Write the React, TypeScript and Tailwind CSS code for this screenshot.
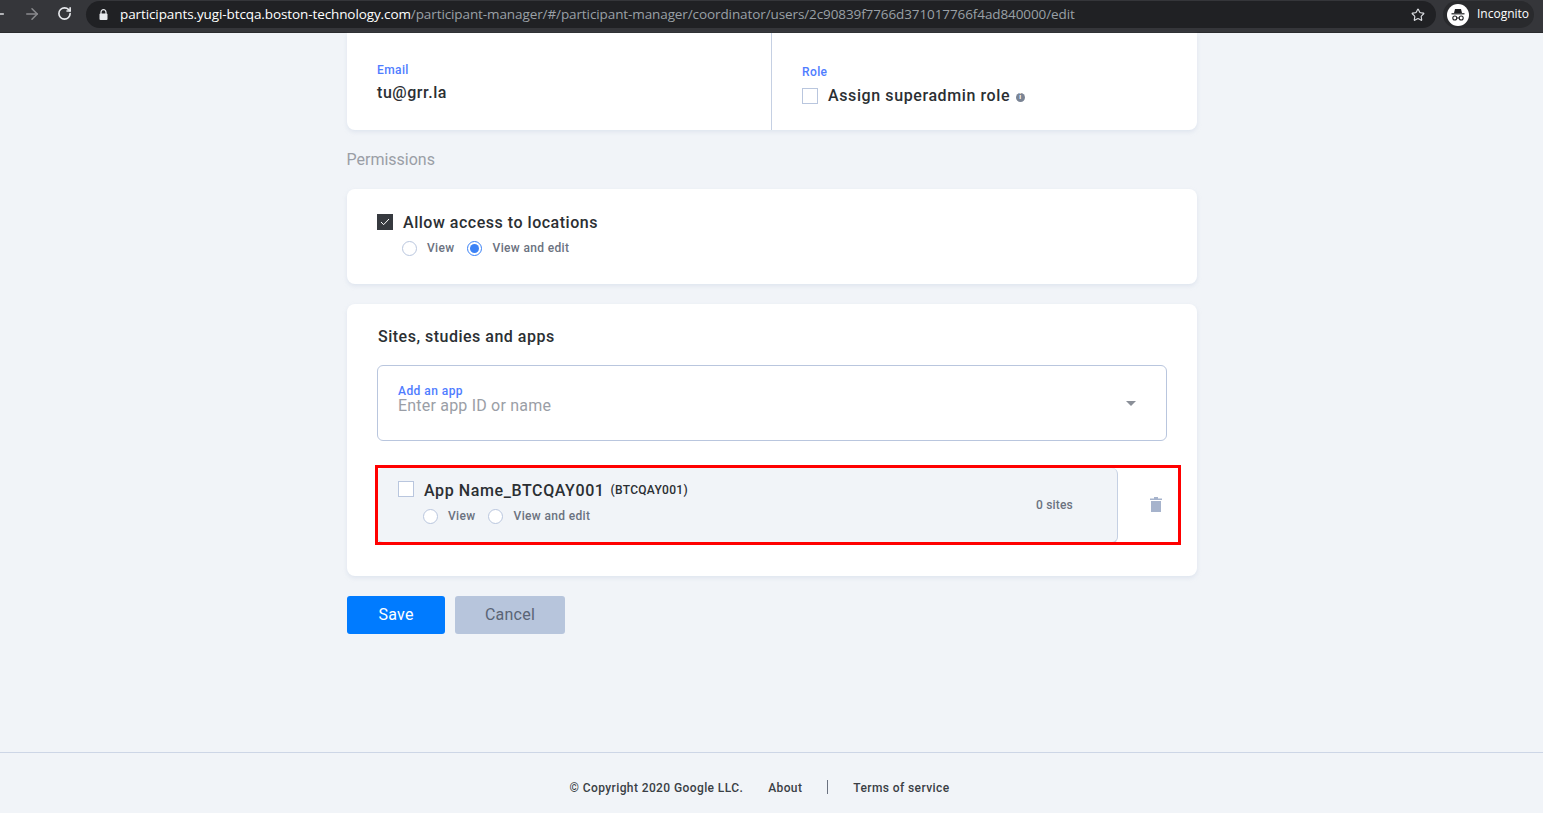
import React from 'react';
import { ArrowLeft, ArrowRight, RotateCw, Star } from 'lucide-react';

const Radio = ({ on }: { on?: boolean }) => (
  <span className={`flex h-[15px] w-[15px] shrink-0 items-center justify-center rounded-full border bg-white ${on ? 'border-[#3b82f6]' : 'border-[#b9c6de]'}`}>
    {on && <span className="h-[9px] w-[9px] rounded-full bg-[#3b82f6]" />}
  </span>
);

const Access = ({ edit }: { edit?: boolean }) => (
  <div className="flex items-center text-[12px] font-medium tracking-[0.35px] text-[#6b7280]">
    <Radio />
    <span className="ml-[10.5px]">View</span>
    <span className="ml-[12.5px]"><Radio on={edit} /></span>
    <span className="ml-[10.5px]">View and edit</span>
  </div>
);

const Box = () => <span className="h-4 w-4 shrink-0 border border-[#b9c6de] bg-white" />;

const Card = ({ className, children }: { className: string; children: React.ReactNode }) => (
  <section className={`w-[850px] bg-white shadow-[0_2px_4px_rgba(190,200,220,0.35)] ${className}`}>{children}</section>
);

const App: React.FC = () => {
  return (
    <div className="relative flex h-[813px] flex-col overflow-hidden bg-[#f1f4f8] font-['Roboto','Liberation_Sans',sans-serif] text-[#2b2f33]">
      {/* browser toolbar */}
      <header className="flex h-[33px] shrink-0 items-start border-b border-[#2a2b2e] bg-[#35363a] pt-px text-[#dadce0]">
        <ArrowLowerLeft />
        <ArrowRight size={18} className="ml-[16px] mt-[4px] text-[#8a8b8e]" />
        <RotateCw size={15} strokeWidth={2.6} className="ml-[16px] mt-[5px] text-[#e8eaed]" />
        <div className="ml-[14px] flex h-[27px] w-[1350px] items-center rounded-full bg-[#202124] pl-[13px] pr-[11px]">
          <svg width="9" height="12" viewBox="0 0 9 12" fill="#e8eaed">
            <rect x="0.5" y="4.5" width="8" height="6.5" rx="1" />
            <path d="M2 5V3.2a2.5 2.5 0 0 1 5 0V5" fill="none" stroke="#e8eaed" strokeWidth="1.2" />
          </svg>
          <div className="ml-[12px] flex-1 whitespace-nowrap font-['Open_Sans',sans-serif] text-[13.5px] tracking-[-0.1px]">
            <span className="text-white">participants.yugi-btcqa.boston-technology.com</span>
            <span className="text-[#9aa0a6]">/participant-manager/#/participant-manager/coordinator/users/2c90839f7766d371017766f4ad840000/edit</span>
          </div>
          <Star size={14} className="text-[#dadce0]" />
        </div>
        <div className="ml-[7px] flex h-[27px] w-[91px] items-center rounded-full bg-[#292a2d] pl-[4px]">
          <span className="flex h-[22px] w-[22px] items-center justify-center rounded-full bg-white">
            <svg width="16" height="16" viewBox="0 0 16 16" fill="#202124">
              <path d="M5 2h6l1 4H4z" />
              <rect x="1.5" y="6.2" width="13" height="1.2" />
              <circle cx="4.8" cy="11" r="2" fill="none" stroke="#202124" strokeWidth="1.1" />
              <circle cx="11.2" cy="11" r="2" fill="none" stroke="#202124" strokeWidth="1.1" />
              <rect x="6.7" y="10.5" width="2.6" height="1" />
            </svg>
          </span>
          <span className="ml-[8px] -mt-px font-['Open_Sans',sans-serif] text-[12px] text-white">Incognito</span>
        </div>
      </header>

      <main className="mx-auto flex w-[850px] flex-1 flex-col items-start">
        <Card className="flex h-[97px] rounded-b-[8px]">
          <div className="w-[425px] border-r border-[#c5d0e3] pl-[30.5px] pt-[29px]">
            <div className="text-[12px] font-medium leading-[16px] tracking-[0.4px] text-[#4f7dff]">Email</div>
            <div className="mt-[3px] text-[16px] font-medium leading-[24px] tracking-[0.55px]">tu@grr.la</div>
          </div>
          <div className="pl-[30px] pt-[31px]">
            <div className="pl-[0.5px] text-[12px] font-medium leading-[16px] tracking-[0.4px] text-[#4f7dff]">Role</div>
            <div className="mt-[4px] flex items-center gap-[10.5px]">
              <Box />
              <span className="text-[16px] font-medium leading-[24px] tracking-[0.6px]">Assign superadmin role</span>
              <span className="-ml-[5px] mt-[3px] flex h-[9px] w-[9px] items-center justify-center rounded-full bg-[#7a8494] text-[7px] font-bold leading-none text-white">i</span>
            </div>
          </div>
        </Card>

        <h2 className="mt-[20px] text-[16px] leading-[20px] text-[#9a9ea6]">Permissions</h2>

        <Card className="mt-[19px] h-[95px] rounded-[8px] pl-[30px] pt-[22px]">
          <div className="flex items-start gap-[10.5px]">
            <span className="mt-[3px] flex h-4 w-4 items-center justify-center bg-[#363a3f]">
              <svg width="10" height="8" viewBox="0 0 10 8" fill="none" stroke="#fff" strokeWidth="1"><path d="M1 4l2.6 2.7L9 1" /></svg>
            </span>
            <span className="mt-px text-[16px] font-medium leading-[22px] tracking-[0.52px]">Allow access to locations</span>
          </div>
          <div className="ml-[25px] mt-[5px]"><Access edit /></div>
        </Card>

        <Card className="mt-[20px] h-[272px] rounded-[8px] px-[30px] pt-[23px]">
          <h3 className="pl-[1.5px] text-[16px] font-medium leading-[20px] tracking-[0.5px]">Sites, studies and apps</h3>
          <div className="mt-[18px] flex h-[76px] w-[790px] items-center justify-between rounded-[6px] border border-[#b9c6de] pl-[20.5px] pr-[30px]">
            <div className="-mt-[6px]">
              <div className="-mt-px mb-px text-[12px] font-medium leading-[12px] tracking-[0.45px] text-[#4f7dff]">Add an app</div>
              <div className="text-[16px] leading-[16px] tracking-[0.2px] text-[#9a9ea6]">Enter app ID or name</div>
            </div>
            <span className="mt-px h-0 w-0 border-x-[5px] border-t-[5px] border-x-transparent border-t-[#8a8f98]" />
          </div>
          <div className="mt-[27px] flex h-[75px] w-[790px] items-stretch">
            <div className="flex w-[741px] items-center justify-between rounded-[6px] border-r border-b border-[#c5d0e3] bg-[#f1f4f8] pl-[21px] pr-[43.5px]">
              <div className="-mt-[6px]">
                <div className="flex items-start">
                  <span className="mt-[2px] flex"><Box /></span>
                  <span className="ml-[10.5px] mt-px text-[16px] font-medium leading-[22px] tracking-[0.6px]">App Name_BTCQAY001</span>
                  <span className="ml-[6px] text-[12px] font-medium leading-[22px] tracking-[0.3px]">(BTCQAY001)</span>
                </div>
                <div className="ml-[25px] mt-[5px]"><Access /></div>
              </div>
              <span className="text-[12px] font-medium tracking-[0.2px] text-[#6b7280]">0 sites</span>
            </div>
            <div className="flex flex-1 items-center justify-center pb-[3px] pl-[27px] pr-0">
              <svg width="14" height="16" viewBox="0 0 14 16" fill="#a6b3cc"><path d="M1 2.5h4V1h4v1.5h4V4H1zM2 5h10v11H2z" /></svg>
            </div>
          </div>
        </Card>

        <div className="mt-[20px] flex gap-[10px] text-[16px] tracking-[0.25px]">
          <button className="h-[38px] w-[98px] rounded-[3px] bg-[#007bff] pl-px text-white">Save</button>
          <button className="h-[38px] w-[110px] rounded-[3px] bg-[#b7c5dc] pl-px text-[#5a6475]">Cancel</button>
        </div>
      </main>

      <footer className="flex h-[61px] shrink-0 items-start justify-center border-t border-[#cdd6e6] pr-[24px] pt-[27px] text-[12px] font-medium leading-[16px] tracking-[0.4px] text-[#3a3f45]">
        <span>© Copyright 2020 Google LLC.</span>
        <span className="ml-[25px]">About</span>
        <span className="ml-[25px] h-[14px] w-px bg-[#6b7280]" />
        <span className="ml-[25px]">Terms of service</span>
      </footer>

      {/* red annotation round the app row */}
      <div className="pointer-events-none absolute left-[375px] top-[465px] h-[80px] w-[806px] border-[3px] border-[#ff0000]" />
    </div>
  );
};

const ArrowLowerLeft = () => <ArrowLeft size={18} strokeWidth={2.2} className="-ml-[11px] mt-[4px] text-[#dadce0]" />;

export default App;
